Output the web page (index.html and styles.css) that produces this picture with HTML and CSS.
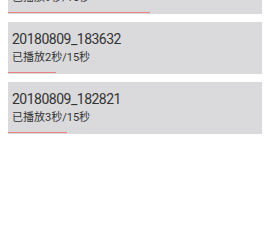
FILE: index.html
```html
<!DOCTYPE html>
<html lang="zh-CN">
<head>
  <meta charset="UTF-8">
  <meta name="viewport" content="width=device-width, initial-scale=1.0">
  <title>录像列表</title>
  <link rel="stylesheet" href="styles.css">
</head>
<body>
  <div class="list">
    <div class="item">
      <div class="name">20180809_184105</div>
      <div class="played">已播放9秒/15秒</div>
      <div class="progress" style="width: 142px"></div>
    </div>
    <div class="item">
      <div class="name">20180809_183632</div>
      <div class="played">已播放2秒/15秒</div>
      <div class="progress" style="width: 48px"></div>
    </div>
    <div class="item">
      <div class="name">20180809_182821</div>
      <div class="played">已播放3秒/15秒</div>
      <div class="progress" style="width: 59px"></div>
    </div>
  </div>
</body>
</html>
```

FILE: styles.css
```css
body {
  margin: 0;
  padding: 0;
  background-color: #ffffff;
  font-family: Roboto, "Noto Sans CJK SC", sans-serif;
  color: #333333;
}
.list {
  margin-top: -38px;
  padding: 0 8px;
  display: flex;
  flex-direction: column;
  gap: 8px;
}
.item {
  position: relative;
  height: 52px;
  box-sizing: border-box;
  padding: 8px 4px 0;
  background-color: #dadadc;
}
.name {
  font-size: 14px;
  line-height: 18px;
  letter-spacing: -0.5px;
}
.played {
  margin-top: 2px;
  font-size: 11px;
  line-height: 16px;
  color: #333333;
}
.progress {
  position: absolute;
  left: 0;
  bottom: 1px;
  height: 1px;
  background-color: #e8827f;
}
```
